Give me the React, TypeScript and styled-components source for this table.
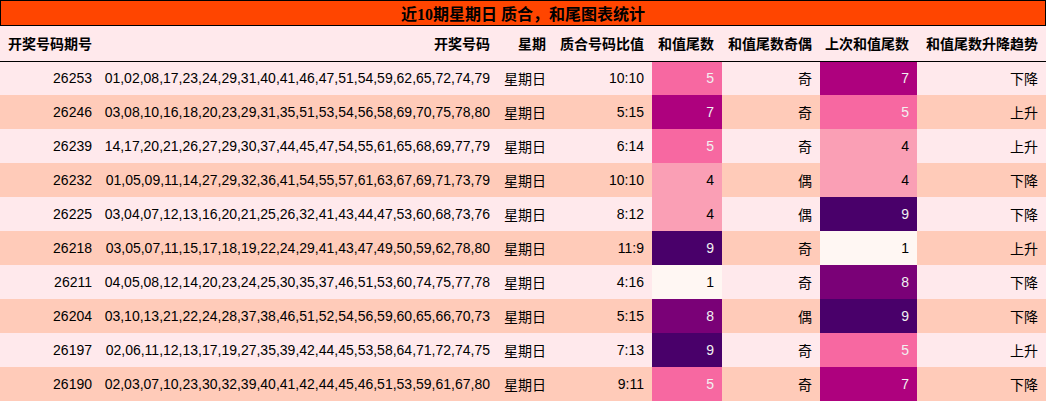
import React from "react";
import styled, { createGlobalStyle } from "styled-components";

const GlobalStyle = createGlobalStyle`
    body {
        margin: 0;
        background: #ffffff;
        font-family: "Liberation Sans", "Noto Sans CJK SC", sans-serif;
    }
`;

const Wrapper = styled.div`
    width: 1046px;
`;

const Title = styled.div`
    height: 24px;
    border: 1px solid #000;
    background: #ff4500;
    display: flex;
    align-items: center;
    justify-content: center;
    font-family: "Liberation Serif", "Noto Sans CJK SC", serif;
    font-weight: bold;
    font-size: 16px;
    color: #000;
`;

const Table = styled.table`
    width: 1046px;
    border-collapse: collapse;
    table-layout: fixed;
    font-size: 14px;
    color: #000;
`;

const HeadRow = styled.tr`
    height: 35px;
    background: #ffe9ec;
    border-bottom: 1px solid #000;
`;

const Th = styled.th`
    text-align: right;
    font-weight: bold;
    padding: 0 8px 0 0;
    white-space: nowrap;
`;

const Row = styled.tr<{ $odd: boolean }>`
    height: 34px;
    background: ${(p) => (p.$odd ? "#ffcbb9" : "#ffe9ec")};
`;

const Td = styled.td`
    text-align: right;
    padding: 0 8px 0 0;
    white-space: nowrap;
`;

const HeatTd = styled(Td)<{ $v: number }>`
    background: ${(p) => heat[p.$v].bg};
    color: ${(p) => heat[p.$v].fg};
`;

const heat: Record<number, { bg: string; fg: string }> = {
    1: { bg: "#fff7f3", fg: "#000" },
    4: { bg: "#fa9fb5", fg: "#000" },
    5: { bg: "#f768a1", fg: "#f1f1f1" },
    7: { bg: "#ae017e", fg: "#f1f1f1" },
    8: { bg: "#7a0177", fg: "#f1f1f1" },
    9: { bg: "#49006a", fg: "#f1f1f1" },
};

const rows = [
    ["26253", "01,02,08,17,23,24,29,31,40,41,46,47,51,54,59,62,65,72,74,79", "10:10", 5, "奇", 7, "下降"],
    ["26246", "03,08,10,16,18,20,23,29,31,35,51,53,54,56,58,69,70,75,78,80", "5:15", 7, "奇", 5, "上升"],
    ["26239", "14,17,20,21,26,27,29,30,37,44,45,47,54,55,61,65,68,69,77,79", "6:14", 5, "奇", 4, "上升"],
    ["26232", "01,05,09,11,14,27,29,32,36,41,54,55,57,61,63,67,69,71,73,79", "10:10", 4, "偶", 4, "下降"],
    ["26225", "03,04,07,12,13,16,20,21,25,26,32,41,43,44,47,53,60,68,73,76", "8:12", 4, "偶", 9, "下降"],
    ["26218", "03,05,07,11,15,17,18,19,22,24,29,41,43,47,49,50,59,62,78,80", "11:9", 9, "奇", 1, "上升"],
    ["26211", "04,05,08,12,14,20,23,24,25,30,35,37,46,51,53,60,74,75,77,78", "4:16", 1, "奇", 8, "下降"],
    ["26204", "03,10,13,21,22,24,28,37,38,46,51,52,54,56,59,60,65,66,70,73", "5:15", 8, "偶", 9, "下降"],
    ["26197", "02,06,11,12,13,17,19,27,35,39,42,44,45,53,58,64,71,72,74,75", "7:13", 9, "奇", 5, "上升"],
    ["26190", "02,03,07,10,23,30,32,39,40,41,42,44,45,46,51,53,59,61,67,80", "9:11", 5, "奇", 7, "下降"],
] as const;

const widths = [100, 398, 56, 98, 70, 98, 97, 129];
const heads = ["开奖号码期号", "开奖号码", "星期", "质合号码比值", "和值尾数", "和值尾数奇偶", "上次和值尾数", "和值尾数升降趋势"];

export default function App() {
    return (
        <Wrapper>
            <GlobalStyle />
            <Title>近10期星期日 质合，和尾图表统计</Title>
            <Table>
                <colgroup>
                    {widths.map((w, i) => (
                        <col key={i} style={{ width: w }} />
                    ))}
                </colgroup>
                <thead>
                    <HeadRow>
                        {heads.map((h) => (
                            <Th key={h}>{h}</Th>
                        ))}
                    </HeadRow>
                </thead>
                <tbody>
                    {rows.map((r, i) => (
                        <Row key={r[0]} $odd={i % 2 === 1}>
                            <Td>{r[0]}</Td>
                            <Td>{r[1]}</Td>
                            <Td>星期日</Td>
                            <Td>{r[2]}</Td>
                            <HeatTd $v={r[3]}>{r[3]}</HeatTd>
                            <Td>{r[4]}</Td>
                            <HeatTd $v={r[5]}>{r[5]}</HeatTd>
                            <Td>{r[6]}</Td>
                        </Row>
                    ))}
                </tbody>
            </Table>
        </Wrapper>
    );
}
